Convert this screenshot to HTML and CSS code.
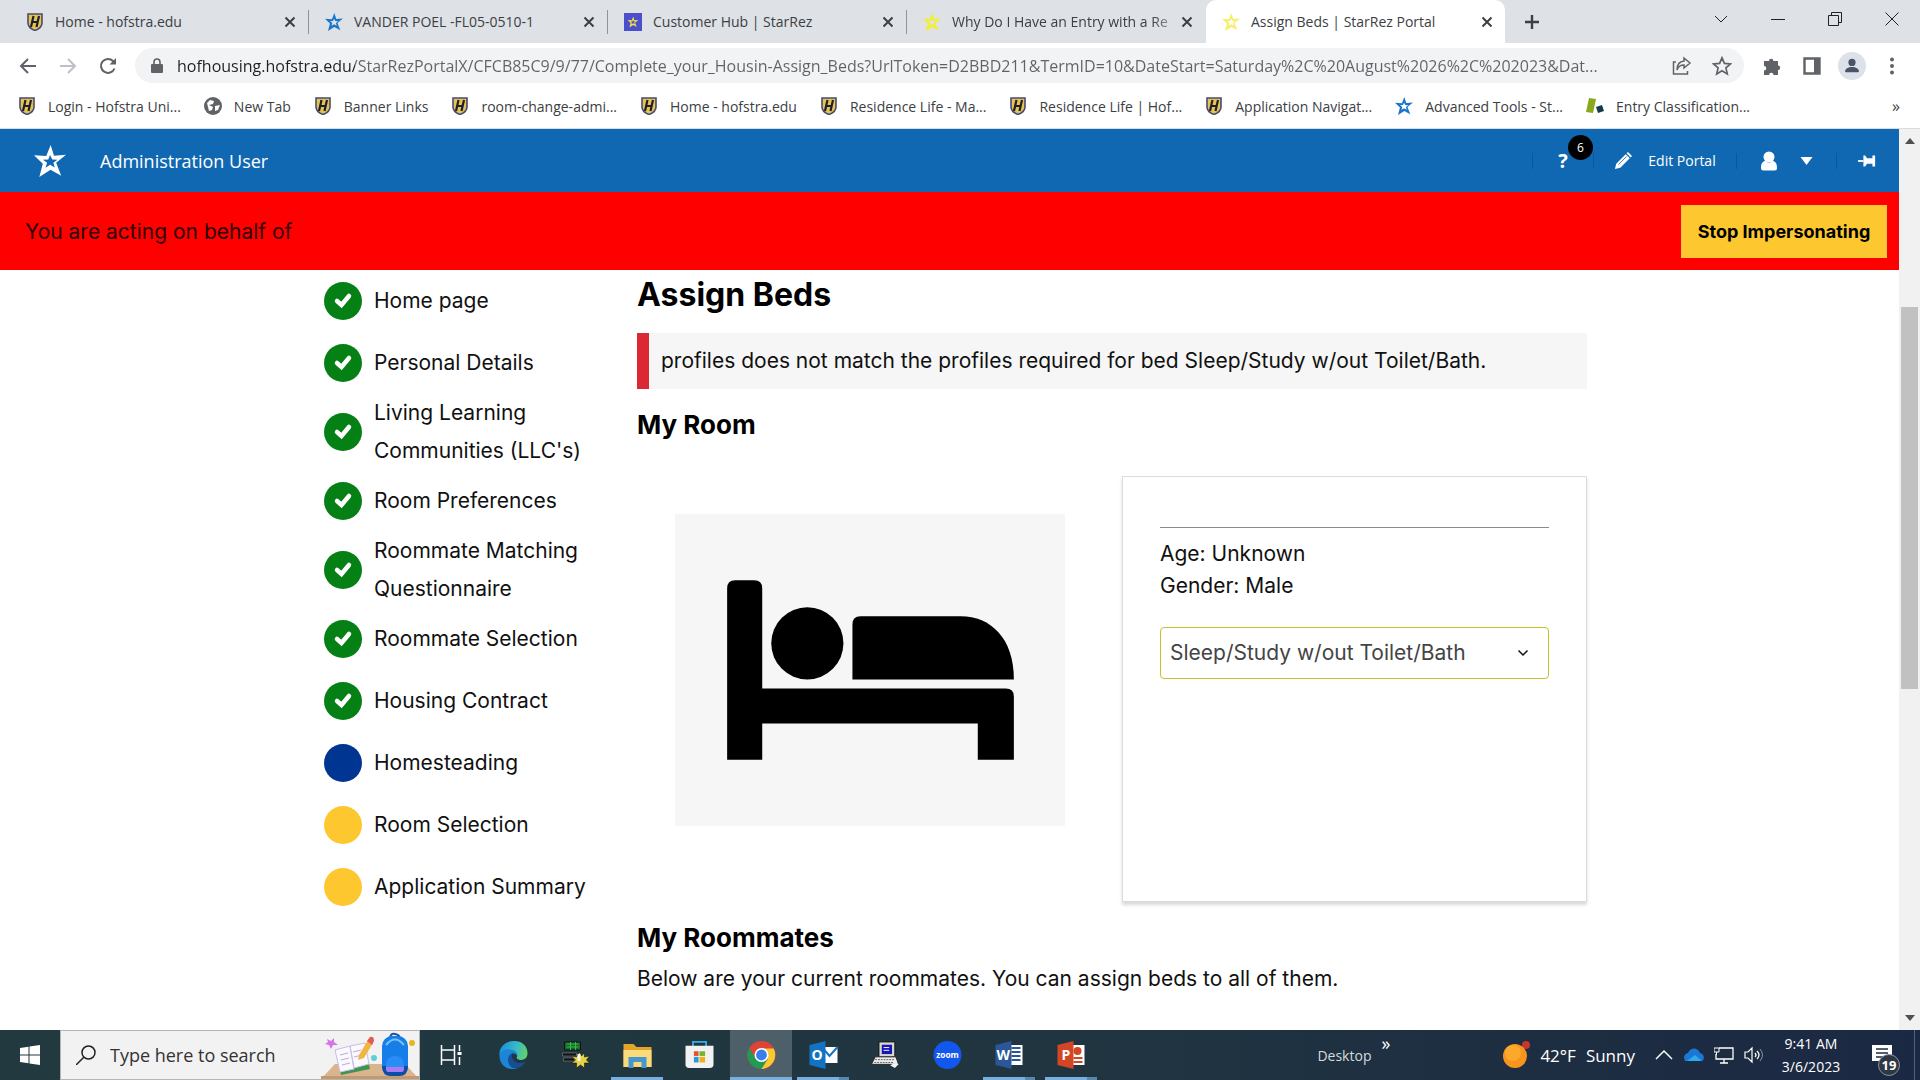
FILE: index.html
```html
<!DOCTYPE html>
<html lang="en">
<head>
    <meta charset="utf-8">
    <title>Assign Beds | StarRez Portal</title>
    <link rel="stylesheet" href="styles.css">
</head>

<body>

    <!-- Shared icons -->
    <svg class="sprite" aria-hidden="true">
        <linearGradient id="edge-top" x1="0" y1=".4" x2="1" y2=".6">
            <stop offset="0" stop-color="#1c8fdc"/>
            <stop offset=".55" stop-color="#38b9c8"/>
            <stop offset="1" stop-color="#62d268"/>
        </linearGradient>
        <symbol id="shield" viewBox="0 0 16 18">
            <path d="M1 1h14v9c0 4-3 6-7 7.500C4 16 1 14 1 10z" fill="#e3c64c" stroke="#4a4a78" stroke-width="1.600"/>
            <path d="M6.500 3L4 14M12 3L9.500 14M5.500 9h5" stroke="#221c33" stroke-width="2.200"/>
        </symbol>
        <symbol id="star" viewBox="0 0 24 24">
            <path fill="currentColor" fill-rule="evenodd" d="M12.500 0l2.500 8 9-.6-7.400 6 3.800 9.600-8-4.500L4 24l2.600-10L0 7.600l9.200.6zM12 7.500l-1.300 3.300-4 .2 3.100 2.400-1.200 3.700 3.500-2.200 3.500 2-1.100-3.600 3.100-2.300-3.900-.2z"/>
        </symbol>
        <symbol id="close" viewBox="0 0 12 12">
            <path d="M1.500 1.500l9 9M10.500 1.500l-9 9" stroke="#3c4043" stroke-width="2"/>
        </symbol>
        <symbol id="check" viewBox="0 0 38 38">
            <circle cx="19" cy="19" r="19" fill="#058014"/>
            <path d="M13 19l4.500 4L25 14" fill="none" stroke="#fff" stroke-width="4.500" stroke-linecap="round"/>
        </symbol>
        <symbol id="dot" viewBox="0 0 38 38">
            <circle cx="19" cy="19" r="19" fill="currentColor"/>
        </symbol>
    </svg>

    <!-- Browser tabs -->
    <div class="tab-strip">
        <div class="tab">
            <svg class="tab-icon"><use href="#shield"/></svg>
            <a href="#" class="tab-title">Home - hofstra.edu</a>
            <button class="tab-close" aria-label="Close tab"><svg><use href="#close"/></svg></button>
        </div>
        <div class="tab">
            <svg class="tab-icon blue"><use href="#star"/></svg>
            <a href="#" class="tab-title">VANDER POEL -FL05-0510-1</a>
            <button class="tab-close" aria-label="Close tab"><svg><use href="#close"/></svg></button>
        </div>
        <div class="tab">
            <svg class="tab-icon hub" viewBox="0 0 20 20"><rect width="20" height="20" fill="#4b4fcb"/><use href="#star" x="4" y="4" width="12" height="12"/></svg>
            <a href="#" class="tab-title">Customer Hub | StarRez</a>
            <button class="tab-close" aria-label="Close tab"><svg><use href="#close"/></svg></button>
        </div>
        <div class="tab">
            <svg class="tab-icon yellow"><use href="#star"/></svg>
            <a href="#" class="tab-title fade">Why Do I Have an Entry with a Re</a>
            <button class="tab-close" aria-label="Close tab"><svg><use href="#close"/></svg></button>
        </div>
        <div class="tab active">
            <svg class="tab-icon pale"><use href="#star"/></svg>
            <a href="#" class="tab-title">Assign Beds | StarRez Portal</a>
            <button class="tab-close" aria-label="Close tab"><svg><use href="#close"/></svg></button>
        </div>
        <button class="new-tab" aria-label="New tab">
            <svg viewBox="0 0 16 16"><path d="M8 1v14M1 8h14" stroke="#3c4043" stroke-width="2.400"/></svg>
        </button>
        <div class="window-controls">
            <button aria-label="Search tabs"><svg viewBox="0 0 14 14"><path d="M1 4l6 6 6-6"/></svg></button>
            <button aria-label="Minimize"><svg viewBox="0 0 14 14"><path d="M0 7.500h14"/></svg></button>
            <button aria-label="Restore"><svg viewBox="0 0 14 14"><path d="M.5 3.500h10v10H.5zM3.500 3V.5h10v10H11"/></svg></button>
            <button aria-label="Close"><svg viewBox="0 0 14 14"><path d="M.5.5l13 13M13.500.5l-13 13"/></svg></button>
        </div>
    </div>

    <!-- Address bar -->
    <div class="toolbar">
        <button class="tool" aria-label="Back"><svg viewBox="0 0 20 20"><path d="M18 10H3M10 3l-7 7 7 7" stroke="#5f6368"/></svg></button>
        <button class="tool" aria-label="Forward"><svg viewBox="0 0 20 20"><path d="M2 10h15M10 3l7 7-7 7" stroke="#bdc1c6"/></svg></button>
        <button class="tool" aria-label="Reload"><svg viewBox="0 0 20 20"><path d="M16.500 12.500A7 7 0 1 1 15 5l2 2" stroke="#5f6368"/><path d="M18 2v6.500h-6.500z" fill="#5f6368"/></svg></button>
        <div class="address">
            <svg class="lock" viewBox="0 0 12 16"><rect y="6" width="12" height="9" rx="1" fill="#5f6368"/><path d="M3 6V4a3 3 0 0 1 6 0v2" fill="none" stroke="#5f6368" stroke-width="1.600"/></svg>
            <input type="text" class="url" aria-label="Address" value="hofhousing.hofstra.edu/StarRezPortalX/CFCB85C9/9/77/Complete_your_Housin-Assign_Beds?UrlToken=D2BBD211&amp;TermID=10&amp;DateStart=Saturday%2C%20August%2026%2C%202023&amp;Dat...">
            <button class="tool" aria-label="Share"><svg viewBox="0 0 20 20"><path d="M4 6H1.500v12h14v-3M12 2l6 5-6 5V9c-4 0-6 2-7 5 0-5 2-8.500 7-9z" stroke="#5f6368" stroke-width="1.500"/></svg></button>
            <button class="tool" aria-label="Bookmark"><svg viewBox="0 0 20 20"><path d="M10 1.800l2.400 5.600 6.100.5-4.600 4 1.400 6L10 14.700 4.700 17.900l1.400-6-4.600-4 6.100-.5z" stroke="#5f6368" stroke-width="1.700"/></svg></button>
        </div>
        <button class="tool" aria-label="Extensions"><svg viewBox="0 0 20 20"><path d="M2 5h5a2.200 2.200 0 1 1 4.400 0H16v4.600a2.200 2.200 0 1 1 0 4.400v5h-4.500a2.200 2.200 0 0 0-4.400 0H2v-4.500a2.200 2.200 0 0 0 0-4.500z" fill="#5f6368"/></svg></button>
        <button class="tool" aria-label="Side panel"><svg viewBox="0 0 20 20"><path d="M2.500 2.500h15v15h-15z" stroke="#5f6368" stroke-width="2.400"/><path d="M12 2h6v16h-6z" fill="#5f6368"/></svg></button>
        <button class="tool avatar" aria-label="Profile"><svg viewBox="0 0 20 20"><circle cx="10" cy="6" r="4" fill="#4a5568"/><path d="M2 17c0-8 16-8 16 0z" fill="#4a5568"/></svg></button>
        <button class="tool" aria-label="Menu"><svg viewBox="0 0 20 20"><g fill="#5f6368"><circle cx="10" cy="3.500" r="2"/><circle cx="10" cy="10" r="2"/><circle cx="10" cy="16.500" r="2"/></g></svg></button>
    </div>

    <!-- Bookmarks -->
    <nav class="bookmarks">
        <a href="#"><svg><use href="#shield"/></svg>Login - Hofstra Uni...</a>
        <a href="#"><svg viewBox="0 0 18 18"><circle cx="9" cy="9" r="9" fill="#5f6368"/><path d="M3 6l3-3 4 1-1 3-4 1 4 2-1 3-3 1zM11 9l5-1-2 5-3 1z" fill="#fff"/></svg>New Tab</a>
        <a href="#"><svg><use href="#shield"/></svg>Banner Links</a>
        <a href="#"><svg><use href="#shield"/></svg>room-change-admi...</a>
        <a href="#"><svg><use href="#shield"/></svg>Home - hofstra.edu</a>
        <a href="#"><svg><use href="#shield"/></svg>Residence Life - Ma...</a>
        <a href="#"><svg><use href="#shield"/></svg>Residence Life | Hof...</a>
        <a href="#"><svg><use href="#shield"/></svg>Application Navigat...</a>
        <a href="#"><svg class="blue"><use href="#star"/></svg>Advanced Tools - St...</a>
        <a href="#"><svg viewBox="0 0 18 18"><path d="M3 1l7 1-3 14-7-1z" fill="#8aa81c"/><path d="M10 10l6-2 2 6-6 2z" fill="#153a4a"/></svg>Entry Classification...</a>
        <button class="more" aria-label="More bookmarks">»</button>
    </nav>

    <!-- Page -->
    <div class="viewport">
        <div class="page">
            <header class="portal-header">
                <svg class="logo"><use href="#star"/></svg>
                <span class="portal-user">Administration User</span>
                <div class="portal-nav">
                    <button class="nav-item help" aria-label="Help"><b>?</b><span class="badge">6</span></button>
                    <a href="#" class="nav-item edit">
                        <svg viewBox="0 0 20 20"><path d="M1 19l1.500-6L13 2.500l4.500 4.500L7 17.500zM14 1.500l1.500-1.500 4.500 4.500-1.500 1.500z" fill="#fff"/><path d="M5 14L14 5" stroke="#1168b2"/></svg>
                        Edit Portal
                    </a>
                    <button class="nav-item user" aria-label="Account">
                        <svg viewBox="0 0 18 20"><circle cx="9" cy="6" r="5.500" fill="#fff"/><path d="M1 17c0-5 2-7 4.500-7 2 2 5 2 7 0C15 10 17 12 17 17q0 2.500-2.500 2.500h-11Q1 19.500 1 17z" fill="#fff"/></svg>
                        <svg class="caret" viewBox="0 0 12 8"><path d="M0 0h12L6 8z" fill="#fff"/></svg>
                    </button>
                    <button class="nav-item" aria-label="Pin">
                        <svg viewBox="0 0 20 16"><path d="M0 8h6" stroke="#fff" stroke-width="2"/><path d="M6 2h2l2 3h6V2h3v12h-3v-3h-6l-2 3H6z" fill="#fff"/></svg>
                    </button>
                </div>
            </header>

            <div class="impersonate">
                <span>You are acting on behalf of</span>
                <button class="stop-button">Stop Impersonating</button>
            </div>

            <div class="content">
                <nav class="steps">
                    <a href="#"><svg><use href="#check"/></svg><span>Home page</span></a>
                    <a href="#"><svg><use href="#check"/></svg><span>Personal Details</span></a>
                    <a href="#"><svg><use href="#check"/></svg><span>Living Learning Communities (LLC's)</span></a>
                    <a href="#"><svg><use href="#check"/></svg><span>Room Preferences</span></a>
                    <a href="#"><svg><use href="#check"/></svg><span>Roommate Matching Questionnaire</span></a>
                    <a href="#"><svg><use href="#check"/></svg><span>Roommate Selection</span></a>
                    <a href="#"><svg><use href="#check"/></svg><span>Housing Contract</span></a>
                    <a href="#"><svg class="current"><use href="#dot"/></svg><span>Homesteading</span></a>
                    <a href="#"><svg class="todo"><use href="#dot"/></svg><span>Room Selection</span></a>
                    <a href="#"><svg class="todo"><use href="#dot"/></svg><span>Application Summary</span></a>
                </nav>

                <main class="main">
                    <h1>Assign Beds</h1>
                    <div class="alert">profiles does not match the profiles required for bed Sleep/Study w/out Toilet/Bath.</div>

                    <h2>My Room</h2>
                    <div class="room">
                        <div class="room-picture">
                            <svg viewBox="0 0 389 311">
                                <path d="M52 245V74q0-8 8-8h19q8 0 8 8v100h243q8 0 8 8v63h-36v-36H87v36z"/>
                                <circle cx="132" cy="129" r="36"/>
                                <path d="M177 165v-55q0-8 8-8h100c30 0 53 22 53 63z"/>
                            </svg>
                        </div>
                        <div class="room-card">
                            <hr>
                            <div>Age: Unknown</div>
                            <div>Gender: Male</div>
                            <div class="bed-select">
                                <select aria-label="Bed">
                                    <option>Sleep/Study w/out Toilet/Bath</option>
                                </select>
                                <svg viewBox="0 0 12 8"><path d="M1.500 1.500L6 6l4.500-4.500" fill="none" stroke="#111" stroke-width="1.500"/></svg>
                            </div>
                        </div>
                    </div>

                    <h2>My Roommates</h2>
                    <p>Below are your current roommates. You can assign beds to all of them.</p>
                </main>
            </div>
        </div>

        <div class="scrollbar">
            <svg viewBox="0 0 10 6"><path d="M0 6l5-6 5 6z" fill="#505050"/></svg>
            <div class="track"><div class="thumb"></div></div>
            <svg viewBox="0 0 10 6"><path d="M0 0h10L5 6z" fill="#505050"/></svg>
        </div>
    </div>

    <!-- Taskbar -->
    <footer class="taskbar">
        <button class="start" aria-label="Start">
            <svg viewBox="0 0 20 20"><path d="M0 3l8.500-1.300v7.800H0zM9.500 1.500L20 0v9.500H9.500zM0 10.500h8.500v7.800L0 17zM9.500 10.500H20V20L9.500 18.500z" fill="#fff"/></svg>
        </button>
        <label class="search">
            <svg class="lens" viewBox="0 0 20 20"><circle cx="12.500" cy="7.500" r="6.500" fill="none" stroke="#222" stroke-width="1.500"/><path d="M8 12l-8 8" stroke="#222" stroke-width="1.500"/></svg>
            <input type="text" placeholder="Type here to search" aria-label="Search">
            <svg class="art" viewBox="0 0 98 48">
                <path d="M14 33h70l14 15H0z" fill="#d9b48d"/>
                <path d="M0 45h98v3H0z" fill="#c39a70"/>
                <path d="M6 8l4 2 3-3 0 4 4 3-5 0-2 4-2-4-4-1 3-2z" fill="#d674e8"/>
                <path d="M15 22l29-6 5 22-29 6z" fill="#3e9455"/>
                <path d="M14 19l15-4 4 23-14 3zM29 15l15-3 4 21-15 4z" fill="#fbf9ff" stroke="#c9bfdf"/>
                <path d="M19 24l8-2M20 29l8-2M21 34l8-2M32 21l8-2M33 26l8-2" stroke="#b8afd0"/>
                <path d="M38 24L47 9l5 3-9 15-6 2z" fill="#f2b542"/><path d="M46 10l3-4q4-1 4 4l-2 4z" fill="#e25c50"/>
                <circle cx="53" cy="27" r="3" fill="#5ed0d4"/><circle cx="91" cy="12" r="3" fill="#e9b51e"/>
                <path d="M69 8q0-6 5-5t5 5" fill="none" stroke="#1456a5" stroke-width="2"/>
                <rect x="61" y="5" width="26" height="40" rx="10" fill="#167ee8"/>
                <path d="M61 35h26q0 10-9 10h-8q-9 0-9-10z" fill="#0d4ca8"/>
                <path d="M65 34q0-9 9-9t9 9v4q0 3-3 3H68q-3 0-3-3z" fill="#2a8cf5"/>
                <path d="M65 36h18v2q0 3-3 3H68q-3 0-3-3z" fill="#a77cf0"/>
                <path d="M65 14q9-11 18 0" fill="none" stroke="#78c1ff" stroke-width="2"/>
            </svg>
        </label>

        <nav class="apps">
            <button aria-label="Task view"><svg viewBox="0 0 28 28"><path d="M4 4v5h13V4M4 24v-5h13v5M4 9v10M17 9v10M22 4v6M22 16v8" fill="none" stroke="#fff" stroke-width="1.500"/><path d="M20 11h4v3h-4z" fill="#fff"/></svg></button>
            <button aria-label="Edge"><svg viewBox="0 0 30 30"><path d="M0 14C0-4 30-5 30 13c0 6-5 8-9 7-3-1-3-2-2-4 0-4-4-6-8-6C6 10 2 12 0 16z" fill="url(#edge-top)"/><path d="M0 16C1 11 6 8 11 9c5 0 8 3 8 7-1-2-3-3-5-3-4 1-5 6-3 10 2 3 5 6 9 6C8 33 0 25 0 16z" fill="#1b86d6"/><path d="M14 13c-3 7 5 14 14 9-3 5-8 8-13 7-7-2-8-14-1-16z" fill="#164f98"/></svg></button>
            <button aria-label="Host tool"><svg viewBox="0 0 28 28"><path d="M3 1h16v8H3z" fill="#176a26" stroke="#111"/><path d="M5 3h12M5 6h12M9 1v8M14 1v8" stroke="#35b84c"/><path d="M1 12h14v3H1zM2 17h11v3H2z" fill="#111" stroke="#999" stroke-width=".5"/><path d="M18 11l2 4 3-3 0 4 5-1-3 4 3 3-5 0 0 5-4-3-4 3 0-5-5 0 4-3-4-4 5 1z" fill="#e2d348" stroke="#161a12" stroke-width=".6"/><path d="M16 13h3v7h-3z" fill="#f5f5e8"/></svg></button>
            <button class="open" aria-label="File Explorer"><svg viewBox="0 0 28 28"><path d="M0 3h10l3 3h15v20H0z" fill="#e0a52a"/><path d="M0 9h28v17H0z" fill="#fadb7c"/><path d="M5 27V16h18v11h-5v-6h-8v6z" fill="#4796cd"/></svg></button>
            <button aria-label="Microsoft Store"><svg viewBox="0 0 30 30"><path d="M8 7V1h14v6" fill="none" stroke="#36aee2" stroke-width="2"/><path d="M0 5h30v20q0 4-4 4H4q-4 0-4-4z" fill="#f2f2f2"/><path d="M9 11h5v5H9z" fill="#e2522c"/><path d="M15 11h6v5h-6z" fill="#73b52c"/><path d="M9 17h5v6H9z" fill="#289bdc"/><path d="M15 17h6v6h-6z" fill="#f2ae1c"/></svg></button>
            <button class="open selected" aria-label="Chrome"><svg viewBox="0 0 30 30"><circle cx="15" cy="15" r="15" fill="#dd4437"/><path d="M2 7.500A15 15 0 0 0 15 30l7-11-13 0z" fill="#219a53"/><path d="M15 30A15 15 0 0 0 28 8H15l7 11z" fill="#f8c932"/><circle cx="15" cy="15" r="7.500" fill="#fff"/><circle cx="15" cy="15" r="5.800" fill="#3b7ded"/></svg></button>
            <button class="open many" aria-label="Outlook"><svg viewBox="0 0 28 28"><path d="M13 6h15v16H13z" fill="#fff"/><path d="M14 8l6 7 8-9" fill="none" stroke="#1273c4" stroke-width="2"/><path d="M0 4l16-4v28L0 24z" fill="#1273c4"/><text x="2" y="19" fill="#fff" font-size="14" font-weight="700">O</text></svg></button>
            <button aria-label="Terminal session"><svg viewBox="0 0 30 30"><path d="M8 1h17v16H8z" fill="#d8d8d0" stroke="#111"/><path d="M11 4h11v10H11z" fill="#1717b8"/><path d="M13 7h6M13 10h6" stroke="#fff"/><path d="M4 17h22l3 8H0z" fill="#eee" stroke="#222"/><path d="M4 20h20M3 23h21" stroke="#555" stroke-dasharray="2 1"/><path d="M20 26q6-4 9-1l-4 4z" fill="#f5f5f5"/></svg></button>
            <button aria-label="Zoom"><svg viewBox="0 0 30 30"><circle cx="15" cy="15" r="15" fill="#1358ee"/><text x="15" y="18" fill="#fff" font-size="9" font-weight="700" text-anchor="middle">zoom</text></svg></button>
            <button class="open many" aria-label="Word"><svg viewBox="0 0 28 28"><path d="M14 4h13v20H14z" fill="#fff"/><path d="M16 7h9M16 11h9M16 15h9M16 19h9" stroke="#2a579a" stroke-width="2"/><path d="M0 4l16-4v28L0 24z" fill="#2a579a"/><text x="1" y="19" fill="#fff" font-size="14" font-weight="700">W</text></svg></button>
            <button class="open many" aria-label="PowerPoint"><svg viewBox="0 0 28 28"><path d="M14 4h13v20H14z" fill="#fff"/><path d="M16 17h9M16 21h9" stroke="#d24625" stroke-width="2"/><circle cx="20" cy="10" r="4" fill="#d24625"/><path d="M0 4l16-4v28L0 24z" fill="#d24625"/><text x="4" y="19" fill="#fff" font-size="14" font-weight="700">P</text></svg></button>
        </nav>

        <div class="tray">
            <span class="desktop">Desktop</span>
            <button class="desktop-more" aria-label="Show desktop items">»</button>
            <a href="#" class="weather">
                <svg viewBox="0 0 28 28"><circle cx="24" cy="4" r="4" fill="#c8352b"/><circle cx="13" cy="15" r="12" fill="#f7941e"/><circle cx="11" cy="12" r="8" fill="#fba92c"/></svg>
                <span>42°F</span><span>Sunny</span>
            </a>
            <div class="tray-icons">
                <button aria-label="Hidden icons"><svg viewBox="0 0 20 20"><path d="M2 14l8-8 8 8" stroke="#fff" stroke-width="1.500" fill="none"/></svg></button>
                <button aria-label="OneDrive"><svg viewBox="0 0 20 20"><path d="M1 16C-2 10 3 8 4 8c2-6 10-6 12 0 5 1 5 8 1 8z" fill="#1a78d4"/><path d="M3 16l8-6 7 6z" fill="#32a8ee"/></svg></button>
                <button aria-label="Network"><svg viewBox="0 0 20 20"><path d="M5 3h14v11H2V9M10 14v4M6 18h8" stroke="#fff" stroke-width="1.300" fill="none"/><path d="M0 3h5v4H0zM2.500 7v3" stroke="#fff" fill="none"/></svg></button>
                <button aria-label="Volume"><svg viewBox="0 0 20 20"><path d="M1 7h3l4-4v14l-4-4H1zM11 8q2 2 0 4M13 6q4 4 0 8" stroke="#fff" stroke-width="1.200" fill="none"/><path d="M16 4q5 6 0 12" stroke="#8893a2" fill="none"/></svg></button>
            </div>
            <div class="clock">
                <span>9:41 AM</span>
                <span>3/6/2023</span>
            </div>
            <button class="notifications" aria-label="Notifications">
                <svg viewBox="0 0 20 20"><path d="M0 0h20v16h-7l-3 3v-3H0z" fill="#fff"/><path d="M4 4h12M4 8h12M4 12h7" stroke="#1b2a40" stroke-width="1.500"/></svg>
                <span class="count">19</span>
            </button>
        </div>
    </footer>

</body>
</html>
```
FILE: styles.css
```css
/* Base Styles */
* {
    box-sizing: border-box;
}

body {
    margin: 0;
    height: 100vh;
    display: flex;
    flex-direction: column;
    overflow: hidden;
    font-family: "Open Sans", "Noto Sans", sans-serif;
    font-size: 14px;
    color: #3c4043;
    background: white;
}

a {
    color: inherit;
    text-decoration: none;
}

button {
    font: inherit;
    color: inherit;
    border: 0;
    padding: 0;
    background: none;
    display: flex;
    align-items: center;
    justify-content: center;
}

svg {
    flex: none;
    display: block;
}

.sprite {
    position: absolute;
    width: 0;
    height: 0;
}

.blue { color: #1b75c9; }
.yellow { color: #f6f01c; }
.pale { color: #f7ee6a; }
.hub { color: #f2e04a; }

/* Browser tabs */
.tab-strip {
    display: flex;
    height: 43px;
    padding-left: 10px;
    background: #dee1e6;
}

.tab {
    display: flex;
    align-items: center;
    width: 299px;
    padding: 0 10px 0 15px;
    border-right: 1px solid #a5a8ad;
    border-image: linear-gradient(transparent 24%, #8f9296 24%, #8f9296 78%, transparent 78%) 1;
}

.tab:nth-child(4) {
    border-color: transparent;
    border-image: none;
}

.tab.active {
    background: white;
    border: 0;
    border-radius: 10px 10px 0 0;
}

.tab-icon {
    width: 20px;
    height: 18px;
}

.tab-title {
    flex: 1;
    margin-left: 10px;
    overflow: hidden;
    white-space: nowrap;
}

.tab-title.fade {
    mask-image: linear-gradient(90deg, black 88%, rgba(0,0,0,0.2));
}

.tab-close {
    width: 16px;
}

.tab-close svg {
    width: 12px;
    height: 12px;
}

.new-tab {
    width: 54px;
}

.new-tab svg {
    width: 16px;
    height: 16px;
}

.window-controls {
    display: flex;
    margin-left: auto;
    height: 37px;
}

.window-controls button {
    width: 57px;
}

.window-controls svg {
    width: 14px;
    height: 14px;
    fill: none;
    stroke: #222;
}

/* Address bar */
.toolbar {
    display: flex;
    align-items: center;
    height: 45px;
    padding: 0 8px;
}

.tool {
    width: 40px;
    height: 28px;
}

.tool svg {
    width: 20px;
    height: 20px;
    fill: none;
    stroke-width: 2;
}

.address {
    flex: 1;
    display: flex;
    align-items: center;
    height: 35px;
    margin: 0 8px 0 7px;
    padding: 0 2px 0 16px;
    border-radius: 18px;
    background: #f1f3f4;
}

.lock {
    width: 12px;
    height: 16px;
}

.url {
    flex: 1;
    min-width: 0;
    margin-left: 14px;
    padding: 0;
    border: 0;
    outline: 0;
    font: inherit;
    font-size: 16px;
    line-height: 28px;
    color: #5f6368;
    /* the host name is darker than the path */
    background: linear-gradient(90deg, #202124 178px, #5f6368 178px);
    -webkit-background-clip: text;
    -webkit-text-fill-color: transparent;
}

.avatar svg {
    width: 28px;
    height: 28px;
    padding: 5px;
    border-radius: 50%;
    background: #dde1ea;
}

/* Bookmarks */
.bookmarks {
    display: flex;
    align-items: center;
    gap: 23px;
    height: 41px;
    padding: 0 20px 4px 18px;
    border-bottom: 1px solid #dadce0;
    white-space: nowrap;
}

.bookmarks a {
    display: flex;
    align-items: center;
    gap: 12px;
}

.bookmarks svg {
    width: 18px;
    height: 18px;
}

.more {
    margin-left: auto;
    font-size: 16px;
}

/* Page */
.viewport {
    flex: 1;
    min-height: 0;
    display: flex;
}

.page {
    flex: 1;
    overflow: hidden;
    font-family: Inter, sans-serif;
    font-size: 21px;
    color: #111;
}

.scrollbar {
    width: 21px;
    padding: 9px 2px;
    display: flex;
    flex-direction: column;
    align-items: center;
    background: #f1f1f1;
}

.scrollbar svg {
    width: 10px;
    height: 6px;
}

.track {
    flex: 1;
    width: 100%;
    padding: 163px 0 0;
}

.thumb {
    height: 54%;
    background: #c1c1c1;
}

/* Portal header */
.portal-header {
    display: flex;
    align-items: center;
    height: 63px;
    padding: 0 2px 0 34px;
    font-family: "Open Sans", sans-serif;
    color: white;
    background: #1168b2;
}

.logo {
    width: 32px;
    height: 32px;
}

.portal-user {
    margin-left: 34px;
    font-size: 18px;
}

.portal-nav {
    display: flex;
    margin-left: auto;
    font-size: 14px;
}

.nav-item {
    position: relative;
    display: flex;
    align-items: center;
    justify-content: center;
    gap: 16px;
    height: 16px;
    width: 61px;
    border-left: 1px solid #0e5796;
}

.nav-item svg {
    width: 18px;
    height: 20px;
}

.nav-item .caret {
    width: 13px;
    height: 8px;
}

.help b {
    font-size: 20px;
}

.nav-item.edit {
    width: 143px;
}

.nav-item.user {
    width: 100px;
    gap: 22px;
}

.badge {
    position: absolute;
    top: -18px;
    right: 0;
    width: 25px;
    height: 25px;
    border-radius: 50%;
    font-size: 12px;
    line-height: 25px;
    text-align: center;
    background: black;
}

.impersonate {
    display: flex;
    align-items: center;
    justify-content: space-between;
    height: 78px;
    padding: 0 12px 0 25px;
    color: #300000;
    background: #ff0000;
}

.stop-button {
    width: 206px;
    height: 53px;
    font-size: 18px;
    font-weight: 700;
    color: black;
    background: #fdc82f;
}

/* Content */
.content {
    display: grid;
    grid-template-columns: 273px 1fr;
    gap: 40px;
    max-width: 1275px;
    margin: 0 auto;
    padding-left: 12px;
}

.steps a {
    display: flex;
    align-items: center;
    gap: 12px;
    min-height: 62px;
    line-height: 38px;
}

.steps svg {
    width: 38px;
    height: 38px;
}

.current { color: #003591; }
.todo { color: #fdc82f; }

h1,
h2,
p {
    margin: 0;
}

h1 {
    padding-top: 5px;
    font-size: 32px;
    line-height: 40px;
    color: black;
}

.alert {
    margin: 18px 0 16px;
    padding: 12px;
    border-left: 12px solid #dc2833;
    line-height: 32px;
    background: #f6f6f6;
}

h2 {
    font-size: 26px;
    line-height: 40px;
    color: black;
}

.room {
    display: grid;
    grid-template-columns: 1fr 1fr;
    gap: 20px;
    margin: 31px 0 16px;
}

.room-picture {
    padding: 38px 37px 38px 38px;
}

.room-picture svg {
    width: 100%;
    fill: black;
    background: #f6f6f6;
}

.room-card {
    min-height: 426px;
    padding: 38px 37px;
    border: 1px solid #dcdcdc;
    box-shadow: 0 3px 3px rgba(0,0,0,0.15);
    line-height: 32px;
}

hr {
    height: 1px;
    margin: 12px 0 10px;
    border: 0;
    background: #8a8a8a;
}

.bed-select {
    display: grid;
    align-items: center;
    margin-top: 25px;
}

.bed-select > * {
    grid-area: 1 / 1;
}

.bed-select svg {
    justify-self: end;
    width: 12px;
    height: 8px;
    margin-right: 20px;
    pointer-events: none;
}

select {
    appearance: none;
    width: 100%;
    height: 52px;
    padding: 0 9px;
    border: 1px solid #c9c02e;
    border-radius: 4px;
    font: inherit;
    color: #444;
    background: white;
}

p {
    line-height: 42px;
}

/* Taskbar */
.taskbar {
    display: flex;
    height: 50px;
    color: white;
    background: linear-gradient(90deg, #22393f, #203540 55%, #1b2843);
}

.start {
    width: 60px;
}

.start svg {
    width: 20px;
    height: 20px;
}

.search {
    display: flex;
    align-items: center;
    width: 360px;
    padding-left: 15px;
    border: 1px solid #b5b5b5;
    background: #f2f2f2;
}

.lens {
    width: 20px;
    height: 20px;
}

.search input {
    flex: 1;
    min-width: 0;
    margin-left: 14px;
    padding: 0;
    border: 0;
    outline: 0;
    font: inherit;
    font-size: 18px;
    background: none;
}

.search input::placeholder {
    color: #333;
}

.art {
    width: 98px;
    height: 48px;
}

.apps {
    display: flex;
}

.apps button {
    width: 62px;
    border: solid transparent;
    border-width: 3px 0;
}

.apps svg {
    width: 29px;
    height: 28px;
}

.apps .open {
    width: 52px;
    margin: 0 5px;
    border-bottom-color: #76b0e0;
}

.apps .many {
    border-image: linear-gradient(90deg, #76b0e0 78%, #5787ad 78%) 3;
    border-top: 0;
    padding-top: 3px;
}

.apps .selected {
    width: 62px;
    margin: 0;
    background: #4d5f68;
    background-clip: border-box;
}

.tray {
    display: flex;
    align-items: center;
    margin-left: auto;
}

.desktop {
    color: #d5dade;
}

.desktop-more {
    margin: 0 112px 24px 10px;
    font-size: 18px;
    line-height: 24px;
}

.weather {
    display: flex;
    align-items: center;
    gap: 10px;
    font-size: 17px;
}

.weather svg {
    width: 28px;
    height: 28px;
}

.tray-icons {
    display: flex;
    margin-left: 14px;
}

.tray-icons button {
    width: 30px;
}

.tray-icons svg {
    width: 20px;
    height: 20px;
}

.clock {
    display: grid;
    width: 84px;
    text-align: center;
    line-height: 23px;
}

.notifications {
    position: relative;
    width: 62px;
    height: 50px;
    margin-right: 5px;
    padding-right: 4px;
    border-right: 1px solid #56627a;
}

.notifications svg {
    width: 20px;
    height: 20px;
}

.count {
    position: absolute;
    right: 14px;
    bottom: 4px;
    width: 22px;
    height: 22px;
    border: 1px solid #8a929e;
    border-radius: 50%;
    font-size: 13px;
    font-weight: 700;
    line-height: 20px;
    text-align: center;
    background: #2f3742;
}
```
